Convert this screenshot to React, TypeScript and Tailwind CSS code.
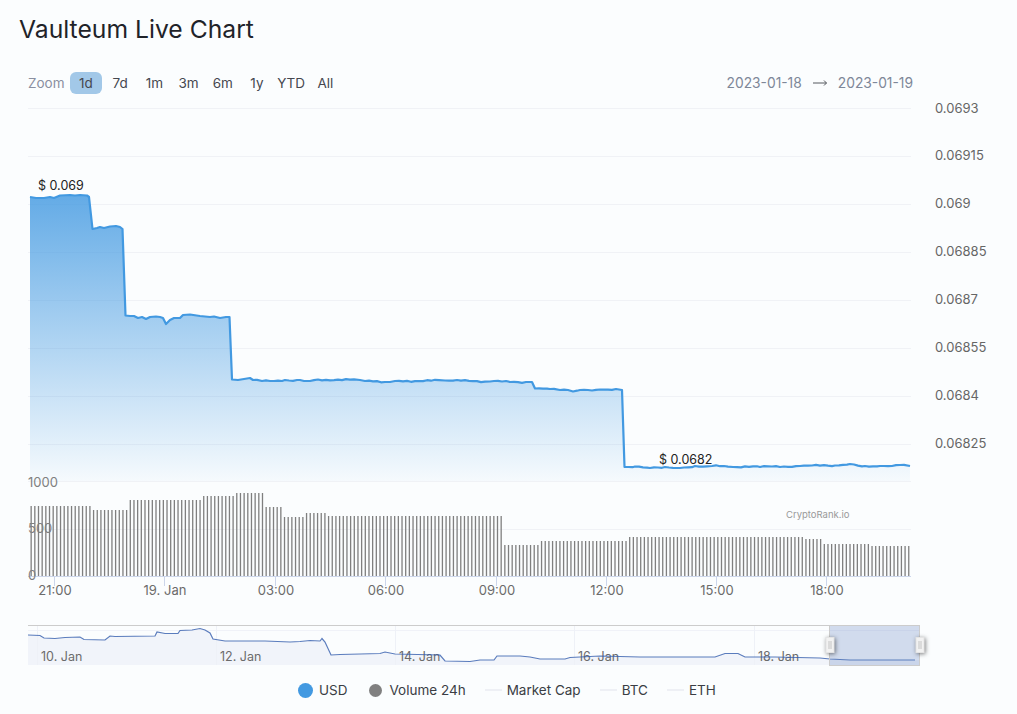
import { useId } from 'react';

const ranges = ['1d', '7d', '1m', '3m', '6m', '1y', 'YTD', 'All'];

const priceGrid = [108, 156, 204, 252, 300, 348, 396, 444, 481];
const priceLabels = [
    { y: 113, text: '0.0693' },
    { y: 160, text: '0.06915' },
    { y: 208, text: '0.069' },
    { y: 256, text: '0.06885' },
    { y: 304, text: '0.0687' },
    { y: 352, text: '0.06855' },
    { y: 400, text: '0.0684' },
    { y: 448, text: '0.06825' },
];

const timeTicks = [
    { x: 54, text: '21:00' },
    { x: 164, text: '19. Jan' },
    { x: 275, text: '03:00' },
    { x: 385, text: '06:00' },
    { x: 496, text: '09:00' },
    { x: 606, text: '12:00' },
    { x: 716, text: '15:00' },
    { x: 826, text: '18:00' },
];

const rawPrice: [number, number][] = [
    [30, 197], [36, 198], [44, 198], [50, 197], [54, 198], [60, 195.5], [70, 195], [75, 195.5], [80, 195], [87, 195.5], [89, 197],
    [92.5, 229], [97, 228], [100, 227], [104, 228], [110, 226.5], [116, 226], [120, 227], [122.5, 229],
    [125.5, 315.5], [130, 316], [134, 316], [138, 318], [142, 317], [146, 319], [150, 317], [156, 316.5], [160, 317], [163, 318], [166, 324], [170, 320], [174, 318], [178, 318], [180, 318], [183, 315], [190, 314.5], [200, 316], [210, 317], [214, 316.5], [220, 318], [226, 317], [229.5, 317],
    [232, 379.5], [238, 380], [244, 379], [250, 378], [253, 380], [262, 381], [285, 380], [300, 380], [310, 381], [318, 379.5], [360, 380], [365, 381], [390, 382], [395, 381], [445, 380.5], [490, 381.5], [532, 382],
    [535, 388.5], [550, 389], [560, 390], [568, 390], [573, 391.5], [580, 390], [600, 389.5], [622, 390],
    [624.5, 467], [635, 466.5], [650, 468], [665, 467], [680, 468], [695, 466], [712, 466], [733, 467], [760, 467], [800, 466], [835, 465.5], [850, 464], [865, 466], [880, 466], [900, 465], [910, 466],
];

// the long flat stretches of the line are not smooth, add a small fixed wobble
const pricePoints = rawPrice
    .flatMap(([x, y], i) => {
        const next = rawPrice[i + 1];
        if (!next || x < 232 || next[0] - x < 6 || Math.abs(next[1] - y) > 4) return [`${x},${y}`];
        const out = [`${x},${y}`];
        for (let px = x + 4; px < next[0] - 2; px += 4) {
            const t = (px - x) / (next[0] - x);
            const noise = 0.55 * Math.sin(px * 1.7) + 0.4 * Math.sin(px * 0.63);
            out.push(`${px},${(y + (next[1] - y) * t + noise).toFixed(1)}`);
        }
        return out;
    })
    .join(' ');

const volumeSteps = [
    { from: 30, to: 90, top: 506 },
    { from: 90, to: 127, top: 510 },
    { from: 127, to: 203, top: 500 },
    { from: 203, to: 234, top: 496 },
    { from: 234, to: 265, top: 493 },
    { from: 265, to: 283, top: 507 },
    { from: 283, to: 305, top: 517 },
    { from: 305, to: 325, top: 513 },
    { from: 325, to: 503, top: 516 },
    { from: 503, to: 538, top: 545 },
    { from: 538, to: 626, top: 541 },
    { from: 626, to: 804, top: 537 },
    { from: 804, to: 820, top: 539 },
    { from: 820, to: 871, top: 544 },
    { from: 871, to: 911, top: 546 },
];

const bars = Array.from({ length: 240 }, (_, i) => {
    const x = 30.5 + i * 3.672;
    const step = volumeSteps.find((s) => x >= s.from && x < s.to);
    return { x, top: step ? step.top : 546 };
});

const navPoints =
    '28,635 40,635.5 44,638 55,638.5 65,637.5 80,637 84,639.5 105,640 110,636 115,636.5 155,636 157,632 165,633.5 178,633.5 180,630.5 192,630 200,628.5 205,630 210,633 213,639 225,641 265,641 290,642 300,641.5 310,640.5 320,641 322,638.5 325,642 331,655 340,654.5 ' +
    '380,653.5 385,652 395,654 440,655 445,661 470,661.5 480,660 494,660 497,656 520,656 530,657 540,659 565,659 570,657.5 600,656 640,657 680,657 715,657 725,653.5 738,653.5 745,657 775,657 820,658 830,659 850,660 915,660';

const navTicks = [
    { x: 37.5, text: '10. Jan' },
    { x: 216.5, text: '12. Jan' },
    { x: 395.5, text: '14. Jan' },
    { x: 574.5, text: '16. Jan' },
    { x: 754.5, text: '18. Jan' },
];

function MainChart() {
    const gradientId = useId();

    return (
        <svg className="block h-[500px] w-[1017px]" viewBox="0 100 1017 500">
            <defs>
                <linearGradient id={gradientId} x1="0" y1="195" x2="0" y2="481" gradientUnits="userSpaceOnUse">
                    <stop offset="0" stopColor="#4299e1" stopOpacity="0.82" />
                    <stop offset="1" stopColor="#4299e1" stopOpacity="0.03" />
                </linearGradient>
            </defs>

            {priceGrid.map((y) => (
                <line key={y} x1="28" x2="911" y1={y + 0.5} y2={y + 0.5} stroke="#f0f2f6" />
            ))}
            <line x1="28" x2="911" y1="529.5" y2="529.5" stroke="#f0f2f6" />

            <polygon points={`30,481 ${pricePoints} 910,481`} fill={`url(#${gradientId})`} />
            <polyline points={pricePoints} fill="none" stroke="#4299e1" strokeWidth="2.2" strokeLinejoin="round" />

            {bars.map((bar) => (
                <rect key={bar.x} x={bar.x} y={bar.top} width="1.3" height={576 - bar.top} fill="#7f7f7f" />
            ))}

            <line x1="28" x2="911" y1="576.5" y2="576.5" stroke="#ccd6eb" />
            {timeTicks.map((tick) => (
                <g key={tick.x}>
                    <line x1={tick.x + 0.5} x2={tick.x + 0.5} y1="576" y2="586" stroke="#ccd6eb" />
                    <text x={tick.x + 1} y="595" textAnchor="middle" className="fill-[#6b6b6b] text-[13px]">
                        {tick.text}
                    </text>
                </g>
            ))}

            {priceLabels.map((label) => (
                <text key={label.text} x="935" y={label.y} className="fill-[#666666] text-[13px]">
                    {label.text}
                </text>
            ))}

            <text x="28" y="487" className="fill-[#808080] text-[13px]">1000</text>
            <text x="28" y="533" className="fill-[#808080] text-[13px]">500</text>
            <text x="28" y="580" className="fill-[#808080] text-[13px]">0</text>

            <text x="38" y="190" className="fill-[#222222] text-[12.5px]">$ 0.069</text>
            <text x="659" y="464" className="fill-[#222222] text-[12.5px]">$ 0.0682</text>
            <text x="786" y="518" className="fill-[#999999] text-[9.5px]">CryptoRank.io</text>
        </svg>
    );
}

function Navigator() {
    return (
        <svg className="block h-[50px] w-[1017px]" viewBox="0 620 1017 50">
            <polygon points={`28,665 ${navPoints} 920,660 920,665`} fill="#f1f4fa" />
            <line x1="28" x2="920" y1="630.5" y2="630.5" stroke="#f0f2f8" />
            {navTicks.map((tick) => (
                <g key={tick.x}>
                    <line x1={tick.x} x2={tick.x} y1="626" y2="665" stroke="#eef1f7" />
                    <text x={tick.x + 3.5} y="661" className="fill-[#6b6b6b] text-[12.5px]">
                        {tick.text}
                    </text>
                </g>
            ))}
            <polyline points={navPoints} fill="none" stroke="#335cad" strokeOpacity="0.8" strokeWidth="1.2" />

            <rect x="829.5" y="625.5" width="90" height="40" fill="#6685c2" fillOpacity="0.28" stroke="#cccccc" />
            <line x1="28" x2="830" y1="625.5" y2="625.5" stroke="#cccccc" />

            {[830, 920].map((x) => (
                <g key={x} className="drop-shadow-[1px_1px_2px_rgba(0,0,0,0.5)]">
                    <rect x={x - 4} y="637.5" width="8" height="15" fill="#f2f2f2" stroke="#e4e4e4" />
                    <line x1={x - 1} x2={x - 1} y1="641" y2="649" stroke="#c4c4c4" />
                    <line x1={x + 1} x2={x + 1} y1="641" y2="649" stroke="#c4c4c4" />
                </g>
            ))}
        </svg>
    );
}

export default function App() {
    return (
        <div className="h-[714px] w-[1017px] overflow-hidden bg-[#fbfdfe] font-['Inter',sans-serif]">
            <h2 className="pl-[19px] pt-[14px] text-[24.7px] leading-[30px] font-normal text-[#1f2329]">Vaulteum Live Chart</h2>

            <div className="mt-[28px] flex h-[22px] items-center justify-between pl-[28px] pr-[104px] text-[13.5px]">
                <div className="flex items-center">
                    <span className="w-[42px] text-[#8a8fa0]">Zoom</span>
                    <div className="flex gap-[2.2px]">
                        {ranges.map((range) => (
                            <button
                                key={range}
                                className={`h-[22px] w-[32px] rounded-md text-center text-[#45474f] ${range === '1d' ? 'bg-[#a2c8e8]' : ''}`}
                            >
                                {range}
                            </button>
                        ))}
                    </div>
                </div>
                <div className="flex items-center gap-[11px] text-[13.8px] text-[#7e8798]">
                    <span>2023-01-18</span>
                    <svg width="14" height="8" viewBox="0 0 14 8" fill="none" stroke="#55585f" strokeWidth="1">
                        <path d="M0 4h13.5M11 1.5 13.5 4 11 6.5" />
                    </svg>
                    <span>2023-01-19</span>
                </div>
            </div>

            <div className="mt-[6px]">
                <MainChart />
            </div>

            <div className="mt-[20px]">
                <Navigator />
            </div>

            <div className="mt-[11px] flex h-[18px] items-center text-[13.5px] text-[#3a3d44]">
                <span className="ml-[298px] h-[15px] w-[15px] rounded-full bg-[#4299e1]" />
                <span className="ml-[6px]">USD</span>
                <span className="ml-[22px] h-[13px] w-[13px] rounded-full bg-[#808080]" />
                <span className="ml-[7px]">Volume 24h</span>
                <span className="ml-[19px] h-0.5 w-[17px] bg-[#eef0f5]" />
                <span className="ml-[5px]">Market Cap</span>
                <span className="ml-[19px] h-0.5 w-[17px] bg-[#eef0f5]" />
                <span className="ml-[5px]">BTC</span>
                <span className="ml-[19px] h-0.5 w-[17px] bg-[#eef0f5]" />
                <span className="ml-[5px]">ETH</span>
            </div>
        </div>
    );
}
